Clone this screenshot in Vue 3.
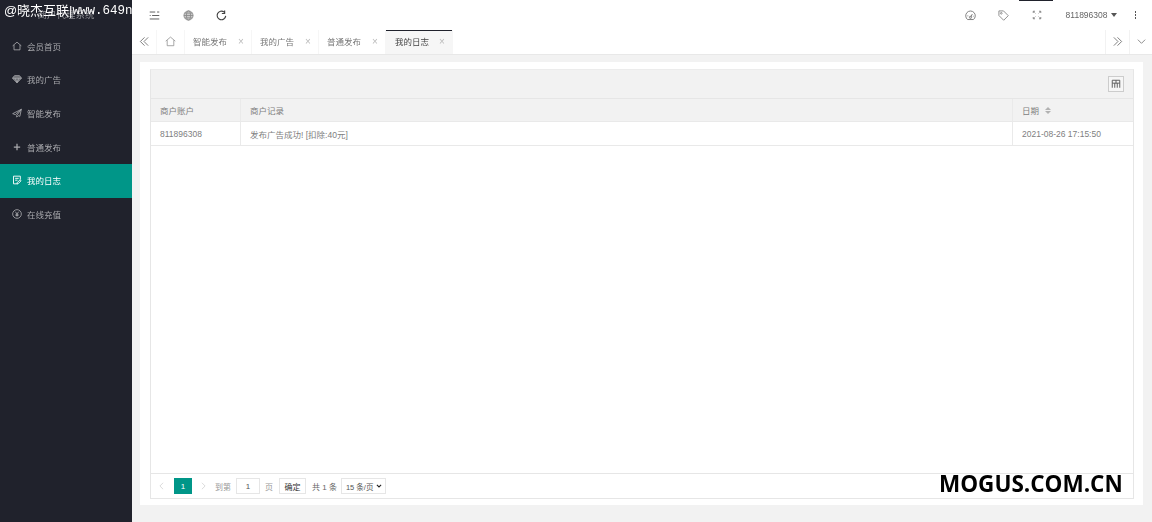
<script setup>
const menu = [
  { label: '会员首页', icon: 'home' },
  { label: '我的广告', icon: 'gem' },
  { label: '智能发布', icon: 'send' },
  { label: '普通发布', icon: 'plus' },
  { label: '我的日志', icon: 'log', active: true },
  { label: '在线充值', icon: 'yen' },
]
const tabs = [
  { label: '智能发布' },
  { label: '我的广告' },
  { label: '普通发布' },
  { label: '我的日志', active: true },
]
</script>

<template>
  <div class="app">
    <div class="soft side-wrap">
      <aside class="side">
        <div class="logo">商户代理系统</div>
        <nav class="menu">
          <a v-for="m in menu" :key="m.label" class="item" :class="{ on: m.active }">
            <svg class="mi" viewBox="0 0 12 12" fill="none" stroke="currentColor" stroke-width="1">
              <path v-if="m.icon === 'home'" d="M.8 5.800 6 1.400l5.200 4.400M2.400 4.800v5.800h7.200V4.800" />
              <g v-else-if="m.icon === 'gem'">
                <path fill="currentColor" fill-opacity=".55" d="M3 2h6l2.400 3L6 10.600.6 5z" />
                <path d="M.6 5h10.800M3.800 5 6 10.600 8.200 5" />
              </g>
              <path v-else-if="m.icon === 'send'" d="M11.200 1.600.8 6.800l3.200 1.200 7.200-6.400L5.600 9v2l1.800-1.800 2 .8z" />
              <path v-else-if="m.icon === 'plus'" stroke-width="1.500" d="M6 2.200v7.600M2.200 6h7.600" />
              <path v-else-if="m.icon === 'log'" stroke-width="1.100" d="M10 5.600V1.400H1.800v9.200h4.600M3.800 4h4.200M3.800 6.200h2.800M7.200 10.600l3.600-3.600-1.200-1.200L6 9.400v1.200z" />
              <g v-else>
                <circle cx="6" cy="6" r="5.200" />
                <path d="M4 3.200 6 6l2-2.800M6 6v3.200M4.200 6.400h3.600M4.200 7.800h3.600" />
              </g>
            </svg>
            <span>{{ m.label }}</span>
          </a>
        </nav>
      </aside>
    </div>

    <main class="main soft">
      <header class="top">
        <div class="tools">
          <svg class="ti" viewBox="0 0 12 12" fill="none" stroke="#555" stroke-width="1">
            <path d="M.8 2.200h6M8.800 2.200h2.400M3.400 6h7.800M.8 9.800h10.400M.8 6h1" />
          </svg>
          <svg class="ti" viewBox="0 0 12 12" fill="#ccc" stroke="#888" stroke-width="0.9">
            <circle cx="6" cy="6" r="5" />
            <ellipse cx="6" cy="6" rx="2.200" ry="5" fill="none" />
            <path d="M1 6h10M1.800 3.400h8.400M1.800 8.600h8.400" fill="none" />
          </svg>
          <svg class="ti" viewBox="0 0 12 12" fill="none" stroke="#444" stroke-width="1.300">
            <path d="M10.600 6.400A4.700 4.700 0 1 1 8.800 2.200" />
            <path d="M9.400.6v3.200H6.400" />
          </svg>
        </div>
        <div class="right">
          <svg class="ri" viewBox="0 0 12 12" fill="none" stroke="#777" stroke-width="1">
            <path d="M2.800 10.400a5.200 5.200 0 1 1 6.400 0z" />
            <path d="M6 8l2-3.600M2.600 6.400h1M8.600 6.800h.8" />
            <circle cx="6" cy="8" r="1.200" />
          </svg>
          <svg class="ri" viewBox="0 0 12 12" fill="none" stroke="#888" stroke-width="1">
            <path d="M1 1h5l5.200 5.200-5 5L1 6z" />
            <circle cx="3.600" cy="3.600" r=".9" />
          </svg>
          <svg class="ri" viewBox="0 0 12 12" fill="none" stroke="#666" stroke-width="1">
            <path d="M1.500 3.500v-2h2M8.500 1.500h2v2M10.500 8.500v2h-2M3.500 10.500h-2v-2M4 4 3 3M8 4l1-1M8 8l1 1M4 8 3 9" />
          </svg>
          <span class="user">811896308</span>
          <i class="caret"></i>
          <span class="dots"><b></b><b></b><b></b></span>
        </div>
        <i class="hover-line"></i>
      </header>

      <div class="tabs">
        <button class="tab-btn">
          <svg viewBox="0 0 12 12" fill="none" stroke="#666" stroke-width="0.9"><path d="M6 1.500 1.500 6 6 10.500M10 1.500 5.500 6 10 10.500" /></svg>
        </button>
        <div class="tab home">
          <svg viewBox="0 0 12 12" fill="none" stroke="#888" stroke-width="0.8"><path d="M.8 5.600 6 1.200l5.200 4.400M2.400 4.600v6h7.200v-6" /></svg>
        </div>
        <div v-for="t in tabs" :key="t.label" class="tab" :class="{ cur: t.active }">
          <span>{{ t.label }}</span><em>×</em>
        </div>
        <div class="spacer"></div>
        <button class="tab-btn edge">
          <svg viewBox="0 0 12 12" fill="none" stroke="#666" stroke-width="0.9"><path d="M2 1.500 6.500 6 2 10.500M6 1.500 10.500 6 6 10.500" /></svg>
        </button>
        <button class="tab-btn edge narrow">
          <svg viewBox="0 0 12 12" fill="none" stroke="#777" stroke-width="0.9"><path d="M2 4l4 4 4-4" /></svg>
        </button>
      </div>

      <section class="body">
        <div class="card">
          <div class="box">
            <div class="toolbar">
              <span class="cols">
                <svg viewBox="0 0 12 12" fill="none" stroke="#555" stroke-width="1.100"><path d="M1.500 1.500h9v3.500h-9zM6 1.500V5M1.500 5v5.500M4.500 5v5.500M7.500 5v5.500M10.500 5v5.500" /></svg>
              </span>
            </div>
            <div class="row head">
              <div class="c1">商户账户</div>
              <div class="c2">商户记录</div>
              <div class="c3">日期<span class="sort"><i class="up"></i><i class="down"></i></span></div>
            </div>
            <div class="row data">
              <div class="c1">811896308</div>
              <div class="c2">发布广告成功! [扣除:40元]</div>
              <div class="c3">2021-08-26 17:15:50</div>
            </div>
            <div class="fill"></div>
            <div class="pager">
              <svg class="arrow" viewBox="0 0 6 10" fill="none" stroke="#d2d2d2" stroke-width="1"><path d="M5 1 1 5l4 4" /></svg>
              <span class="page">1</span>
              <svg class="arrow" viewBox="0 0 6 10" fill="none" stroke="#d2d2d2" stroke-width="1"><path d="m1 1 4 4-4 4" /></svg>
              <span class="muted to">到第</span>
              <span class="input">1</span>
              <span class="muted">页</span>
              <span class="ok">确定</span>
              <span class="total">共 1 条</span>
              <span class="size">15 条/页<svg viewBox="0 0 10 6" fill="none" stroke="#222" stroke-width="1.800"><path d="m1.500 1 3.500 3.500L8.500 1" /></svg></span>
            </div>
          </div>
        </div>
      </section>
    </main>

    <div class="mark-tl"><span class="at">@</span><span>晓杰互联</span><span class="bar">|</span><span class="url">www.649n</span></div>
    <div class="mark-br">MOGUS.COM.CN</div>
  </div>
</template>

<style>
html, body { margin: 0; overflow: hidden; }
</style>

<style scoped>
.app {
  position: relative;
  display: flex;
  width: 1152px;
  height: 522px;
  overflow: hidden;
  background: #f2f2f2;
  font-family: "Liberation Sans", "Noto Sans CJK SC", sans-serif;
  font-size: 8.500px;
  color: #666;
}
.soft { filter: blur(0.3px); }
.side-wrap { width: 132px; flex: none; }
.side { height: 100%; background: #20222c; color: #a8a9ad; }
.logo { height: 30px; line-height: 30px; text-align: center; font-size: 9.500px; color: #8f9095; }
.item { display: flex; align-items: center; height: 33.600px; padding: 0 0 2px 12px; gap: 5px; box-sizing: border-box; }
.item.on { background: #009688; color: #fff; }
.mi { width: 10px; height: 10px; flex: none; }
.main { flex: 1; min-width: 0; display: flex; flex-direction: column; }
.top { position: relative; height: 30px; flex: none; background: #fff; display: flex; justify-content: space-between; align-items: center; }
.tools { display: flex; align-items: center; gap: 22.500px; padding-left: 17px; }
.ti { width: 11px; height: 11px; }
.right { display: flex; align-items: center; padding-right: 16px; }
.ri { width: 11px; height: 11px; margin-right: 22.500px; }
.ri:nth-child(3) { width: 10px; height: 10px; margin-right: 24px; }
.user { color: #666; }
.caret { width: 0; height: 0; border: 3.500px solid transparent; border-top: 4px solid #555; border-bottom: 0; margin: 0 18px 0 3px; }
.dots { display: flex; flex-direction: column; gap: 1.500px; }
.dots b { width: 1.500px; height: 1.500px; background: #555; }
.hover-line { position: absolute; top: 0; left: 887px; width: 34px; height: 1px; background: #20222c; }
.tabs { height: 24px; flex: none; display: flex; background: #fff; border-bottom: 1px solid #e8e8e8; box-sizing: content-box; }
.tab-btn { width: 24px; padding: 0 0 1px; border: 0; background: #fff; display: flex; align-items: center; justify-content: center; }
.tab-btn svg { width: 11px; height: 11px; }
.tab-btn.edge { border-left: 1px solid #f2f2f2; }
.tab-btn.narrow { width: 23px; }
.tab { display: flex; align-items: center; padding: 0 0 2px 8px; width: 67px; box-sizing: border-box; border-right: 1px solid #f6f6f6; color: #777; position: relative; }
.tab em { font-style: normal; color: #bbb; font-size: 10px; margin-left: 11px; }
.tab.home { width: 29px; padding-left: 8px; border-left: 1px solid #f6f6f6; flex: none; }
.tab.home svg { width: 11px; height: 11px; }
.tab.cur { background: #f6f6f6; color: #444; box-shadow: inset 0 1px 0 #20222c; padding-left: 9px; }
.tab.cur em { margin-left: 10px; }
.spacer { flex: 1; }
.body { flex: 1; min-height: 0; padding: 7px 9px 17px 8px; }
.card { height: 100%; background: #fff; padding: 7px 9px 6px 10px; box-sizing: border-box; }
.box { height: 100%; border: 1px solid #e6e6e6; border-top-color: #ececec; box-sizing: border-box; display: flex; flex-direction: column; }
.toolbar { height: 29px; box-sizing: border-box; flex: none; background: #f2f2f2; border-bottom: 1px solid #e6e6e6; display: flex; align-items: center; justify-content: flex-end; padding-right: 9px; }
.cols { width: 16px; height: 16px; border: 1px solid #ccc; box-sizing: border-box; display: flex; align-items: center; justify-content: center; background: #f6f6f6; }
.cols svg { width: 10px; height: 10px; }
.row { display: flex; height: 23px; box-sizing: border-box; border-bottom: 1px solid #e9e9e9; flex: none; align-items: stretch; color: #808080; }
.row.head { background: #f2f2f2; }
.row.data { height: 24px; }
.row > div { display: flex; align-items: center; padding: 0 0 0 9px; box-sizing: border-box; }
.c1 { width: 90px; border-right: 1px solid #eaeaea; }
.c2 { flex: 1; }
.c3 { width: 121px; border-left: 1px solid #eaeaea; }
.sort { display: inline-flex; flex-direction: column; gap: 1px; margin-left: 6px; }
.sort i { width: 0; height: 0; border: 3px solid transparent; }
.sort .up { border-top: 0; border-bottom: 3px solid #b2b2b2; }
.sort .down { border-bottom: 0; border-top: 3px solid #b2b2b2; }
.fill { flex: 1; }
.pager { height: 25px; box-sizing: border-box; flex: none; border-top: 1px solid #e6e6e6; display: flex; align-items: center; padding-left: 8px; color: #666; font-size: 8px; }
.arrow { width: 5px; height: 8px; flex: none; }
.page { width: 18px; height: 16px; margin-left: 10px; background: #009688; color: #fff; display: flex; align-items: center; justify-content: center; }
.page + .arrow { margin-left: 9px; }
.muted { color: #999; }
.to { margin-left: 9px; }
.input { width: 24px; height: 16px; margin: 0 5px 0 5px; border: 1px solid #e6e6e6; box-sizing: border-box; display: flex; align-items: center; justify-content: center; color: #555; }
.ok { width: 27px; height: 16px; margin-left: 6px; border: 1px solid #e6e6e6; box-sizing: border-box; display: flex; align-items: center; justify-content: center; color: #333; }
.total { margin-left: 6px; }
.size { width: 45px; height: 16px; margin-left: 4px; padding-left: 4px; border: 1px solid #e6e6e6; box-sizing: border-box; display: flex; align-items: center; justify-content: space-between; padding-right: 3px; color: #555; font-size: 7.500px; }
.size svg { width: 6px; height: 4px; flex: none; }
.mark-tl { position: absolute; left: 4px; top: 3px; width: 128px; overflow: hidden; display: flex; font-size: 13px; line-height: 16px; color: #fff; white-space: nowrap; }
.at { width: 13px; }
.bar { width: 8px; text-align: center; }
.url { font-family: "Liberation Mono", monospace; font-size: 12.500px; }
.mark-br { position: absolute; left: 939px; top: 471px; font-family: "Open Sans", "Liberation Sans", sans-serif; font-weight: 700; font-size: 22.500px; line-height: 26px; color: #000; white-space: nowrap; }
</style>
